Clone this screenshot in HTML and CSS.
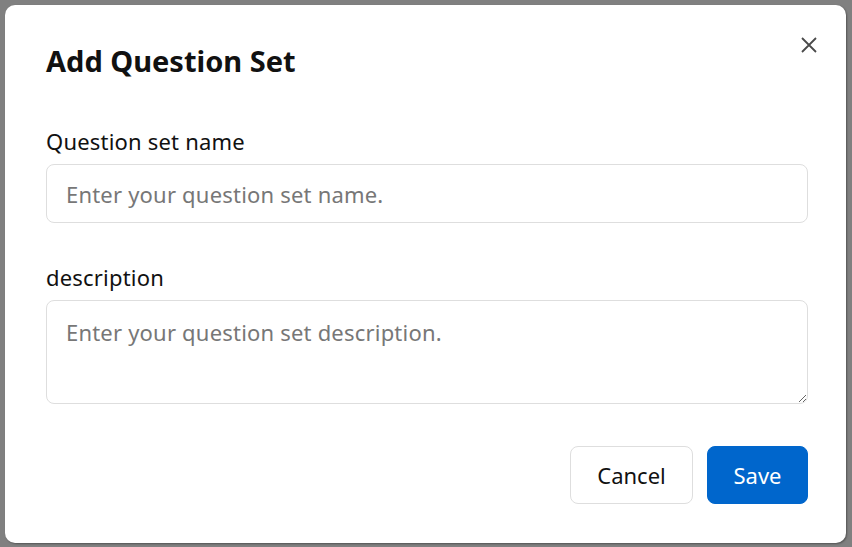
FILE: index.html
```html
<!DOCTYPE html>
<html lang="en">
<head>
    <meta charset="UTF-8">
    <title>Add Question Set</title>
    <link rel="stylesheet" href="styles.css">
</head>
<body>
    <div class="modal">
        <button class="close-btn" aria-label="Close">
            <svg width="18" height="18" viewBox="0 0 18 18">
                <path d="M2 2 L16 16 M16 2 L2 16" stroke="#4a4a4a" stroke-width="1.8" fill="none"/>
            </svg>
        </button>
        <h2 class="modal-title">Add Question Set</h2>

        <div class="field">
            <label class="field-label" for="setName">Question set name</label>
            <input type="text" id="setName" class="field-input" placeholder="Enter your question set name.">
        </div>

        <div class="field">
            <label class="field-label" for="setDesc">description</label>
            <textarea id="setDesc" class="field-textarea" placeholder="Enter your question set description."></textarea>
        </div>

        <div class="actions">
            <button class="btn btn-cancel">Cancel</button>
            <button class="btn btn-save">Save</button>
        </div>
    </div>
</body>
</html>
```

FILE: styles.css
```css
body {
    margin: 0;
    background: #808080;
    font-family: 'Noto Sans', 'Noto Sans CJK KR', sans-serif;
    color: #111111;
}

.modal {
    position: relative;
    box-sizing: border-box;
    margin: 5px 6px 4px 5px;
    height: 538px;
    background: #ffffff;
    border-radius: 10px;
    padding: 36px 38px 0 41px;
    box-shadow: 1px 1px 2px rgba(0, 0, 0, 0.35);
}

.close-btn {
    position: absolute;
    top: 31px;
    right: 28px;
    width: 18px;
    height: 18px;
    padding: 0;
    border: none;
    background: none;
    cursor: pointer;
}

.close-btn svg {
    display: block;
}

.modal-title {
    margin: 0 0 46px 0;
    font-size: 29px;
    font-weight: 700;
    line-height: 40px;
}

.field {
    margin-bottom: 40px;
}

.field:last-of-type {
    margin-bottom: 0;
}

.field-label {
    display: block;
    font-size: 22px;
    line-height: 28px;
    letter-spacing: 0.2px;
    margin-bottom: 9px;
}

.field-input,
.field-textarea {
    display: block;
    box-sizing: border-box;
    width: 100%;
    margin: 0;
    border: 1px solid #dedede;
    border-radius: 8px;
    font-family: inherit;
    font-size: 22px;
    letter-spacing: 0.2px;
    color: #111111;
    outline: none;
}

.field-input {
    height: 59px;
    padding: 0 19px;
}

.field-textarea {
    height: 104px;
    padding: 17px 19px;
    resize: vertical;
    line-height: 1.3;
}

.field-input::placeholder,
.field-textarea::placeholder {
    color: #777777;
}

.actions {
    display: flex;
    justify-content: flex-end;
    gap: 14px;
    margin-top: 42px;
}

.btn {
    height: 58px;
    border-radius: 8px;
    font-family: inherit;
    font-size: 22px;
    cursor: pointer;
}

.btn-cancel {
    width: 123px;
    background: #ffffff;
    border: 1px solid #dedede;
    color: #111111;
}

.btn-save {
    width: 101px;
    background: #0066cc;
    border: 1px solid #0066cc;
    color: #ffffff;
}
```
